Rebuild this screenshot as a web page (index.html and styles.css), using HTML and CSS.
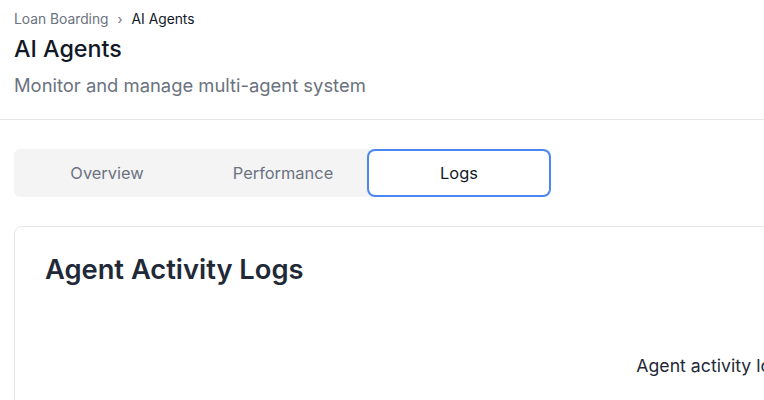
FILE: index.html
```html
<!DOCTYPE html>
<html lang="en">
<head>
<meta charset="utf-8">
<title>AI Agents</title>
<link rel="stylesheet" href="styles.css">
</head>
<body>
<div class="page">
  <header class="header">
    <nav class="crumbs">
      <span class="crumb">Loan Boarding</span>
      <span class="sep">›</span>
      <span class="crumb current">AI Agents</span>
    </nav>
    <h1 class="title">AI Agents</h1>
    <p class="subtitle">Monitor and manage multi-agent system</p>
  </header>
  <main class="main">
    <div class="tabs">
      <button class="tab">Overview</button>
      <button class="tab">Performance</button>
      <button class="tab active">Logs</button>
    </div>
    <section class="card">
      <h2 class="card-title">Agent Activity Logs</h2>
      <div class="card-body">
        <p class="empty">Agent activity logs will appear here</p>
      </div>
    </section>
  </main>
</div>
</body>
</html>
```
FILE: styles.css
```css
html, body {
  margin: 0;
  padding: 0;
  background: #ffffff;
  overflow: hidden;
}
body {
  font-family: Inter, "Noto Sans", sans-serif;
  color: #111827;
}
.page {
  width: 1580px;
}
.header {
  padding: 9px 14px 0;
  height: 120px;
  border-bottom: 1px solid #e5e7eb;
  width: 764px;
  box-sizing: border-box;
}
.crumbs {
  display: flex;
  align-items: center;
  gap: 9px;
  font-size: 13.8px;
  line-height: 20px;
}
.crumb { color: #6b7280; }
.crumb.current { color: #111827; }
.sep { color: #6b7280; font-size: 13px; }
.title {
  margin: 6px 0 0;
  font-size: 23.3px;
  line-height: 28px;
  font-weight: 500;
  color: #111827;
}
.subtitle {
  margin: 8px 0 0;
  font-size: 18.4px;
  line-height: 28px;
  color: #6b7280;
}
.main {
  padding: 29px 14px 0;
}
.tabs {
  display: grid;
  grid-template-columns: repeat(3, 176px);
  padding: 4px 4px 4px 5px;
  width: max-content;
  background: #f4f4f5;
  border-radius: 6px;
}
.tab {
  height: 40px;
  border: 0;
  background: transparent;
  font-family: inherit;
  font-size: 16.4px;
  color: #6b7280;
  border-radius: 4px;
  cursor: pointer;
}
.tab.active {
  background: #ffffff;
  color: #111827;
  box-shadow: 0 0 0 2px #ffffff, 0 0 0 4px #4a87f2;
}
.card {
  margin-top: 29px;
  border: 1px solid #e5e7eb;
  border-radius: 8px;
  width: 1538px;
  height: 400px;
  box-sizing: border-box;
}
.card-title {
  margin: 0;
  padding: 25px 30px 0;
  font-size: 27.3px;
  line-height: 36px;
  font-weight: 600;
  color: #1f2937;
}
.card-body {
  padding-top: 64px;
  text-align: center;
}
.empty {
  margin: 0;
  font-size: 17.7px;
  line-height: 28px;
  color: #1f2937;
}
```
